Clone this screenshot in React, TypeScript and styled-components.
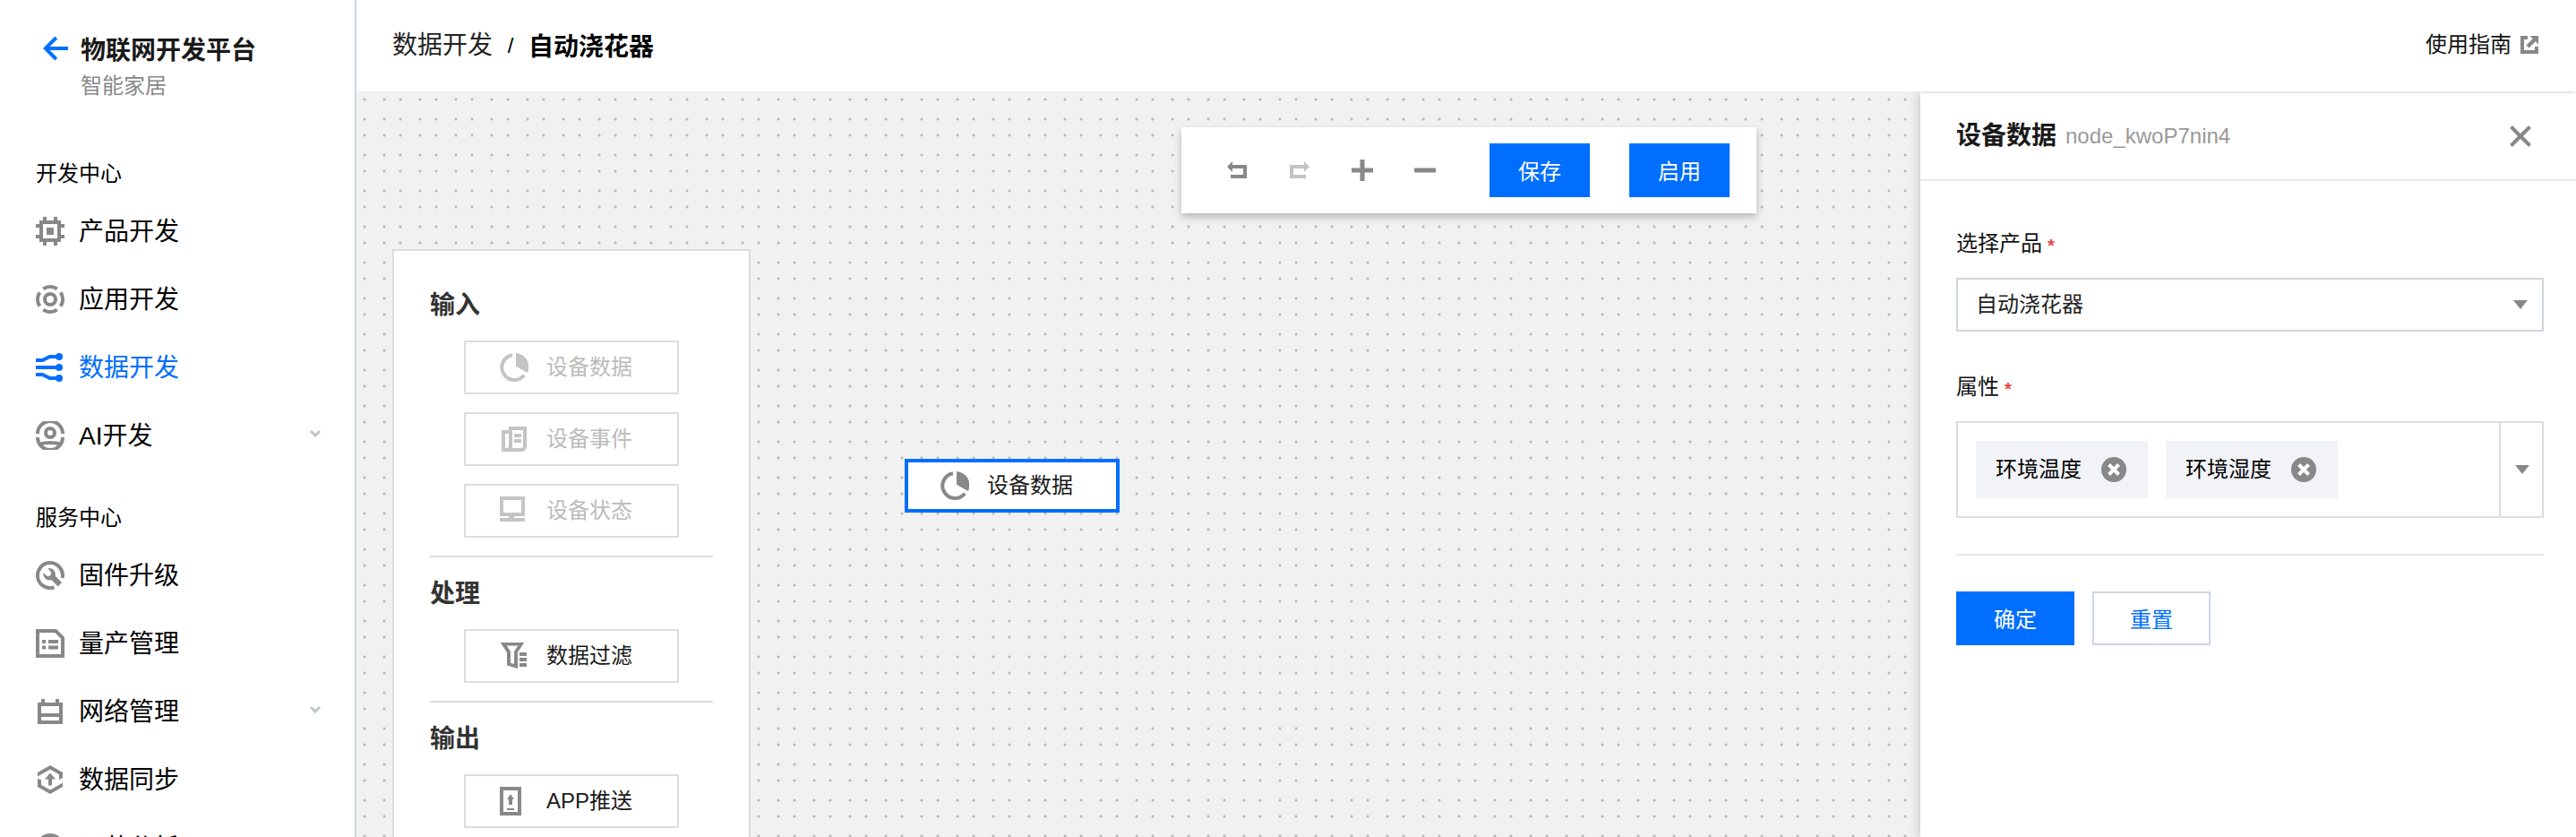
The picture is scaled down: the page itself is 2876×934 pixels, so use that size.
import React from 'react';
import styled, { createGlobalStyle, css } from 'styled-components';

const GlobalStyle = createGlobalStyle`
  *, *::before, *::after { box-sizing: border-box; }
  html, body { margin: 0; padding: 0; }
  body {
    font-family: "Liberation Sans", "Noto Sans CJK SC", sans-serif;
    font-size: 24px;
    line-height: 40px;
    color: #000;
    background: #fff;
    overflow: hidden;
  }
  button { font: inherit; margin: 0; padding: 0; }
`;

const BLUE = '#006eff';
const GREY = '#888';

/* ---------- icons ---------- */

const Icon = styled.svg<{ $size?: number; $color?: string }>`
  display: block;
  flex: none;
  width: ${p => p.$size ?? 32}px;
  height: ${p => p.$size ?? 32}px;
  color: ${p => p.$color ?? GREY};
  fill: currentColor;
`;

type IconProps = { color?: string };

const BackIcon = () => (
  <Icon $size={28} $color={BLUE} viewBox="0 0 28 28">
    <path d="M28 12v4H7.6l8.6 8.6-2.8 2.8L0 14 13.4.6l2.8 2.8L7.6 12z" />
  </Icon>
);

const ProductIcon = ({ color }: IconProps) => (
  <Icon $color={color} viewBox="0 0 32 32">
    <path fillRule="evenodd" d="M8 0h4v4h8V0h4v4h4v4h4v4h-4v8h4v4h-4v4h-4v4h-4v-4h-8v4H8v-4H4v-4H0v-4h4v-8H0V8h4V4h4zM8 8v16h16V8z" />
    <rect x="12" y="12" width="8" height="8" />
  </Icon>
);

const AppIcon = ({ color }: IconProps) => (
  <Icon $color={color} viewBox="0 0 32 32">
    <g fill="none" stroke="currentColor" strokeWidth="4">
      <circle cx="16" cy="16" r="6" />
      <path d="M8.3 4.3A14 14 0 0 1 23.7 4.3M27.7 8.3A14 14 0 0 1 27.7 23.7M23.7 27.7A14 14 0 0 1 8.3 27.7M4.3 23.7A14 14 0 0 1 4.3 8.3" />
    </g>
  </Icon>
);

const DataIcon = ({ color }: IconProps) => (
  <Icon $color={color} viewBox="0 0 32 32">
    <path d="M0 8h7.500L15.500 4H26M0 16h26M0 24h7.500L15.500 28H26" fill="none" stroke="currentColor" strokeWidth="4" />
    <circle cx="26" cy="4" r="4" />
    <circle cx="26" cy="16" r="4" />
    <circle cx="26" cy="28" r="4" />
  </Icon>
);

const AiIcon = ({ color }: IconProps) => (
  <Icon $color={color} viewBox="0 0 32 32">
    <g fill="none" stroke="currentColor" strokeWidth="4">
      <circle cx="16" cy="13" r="5" />
      <path d="M2 14a14 14 0 0 1 28 0M2 18a14 14 0 0 0 28 0" />
      <path d="M5 25.500q4-1.600 11-1.600t11 1.600" />
    </g>
  </Icon>
);

const FirmwareIcon = ({ color }: IconProps) => (
  <Icon $color={color} viewBox="0 0 32 32">
    <path d="M20.500 29.300A14 14 0 1 1 29.600 19" fill="none" stroke="currentColor" strokeWidth="4" />
    <path d="M13.500 8.200a7 7 0 0 1 8.200 8.600l7.300 7.300-4.300 4.300-7.300-7.300A7 7 0 0 1 8.400 13.200l4.400 4 3.500-.9.900-3.500z" />
  </Icon>
);

const BatchIcon = ({ color }: IconProps) => (
  <Icon $color={color} viewBox="0 0 32 32">
    <path fillRule="evenodd" d="M0 0h23l9 9v23H0zM4 4v24h24V10.800L21.300 4z" />
    <path d="M7 12h4v4H7zM14 12h11v4H14zM7 18.500h4v4H7zM14 18.500h11v4H14z" />
  </Icon>
);

const NetworkIcon = ({ color }: IconProps) => (
  <Icon $color={color} viewBox="0 0 32 32">
    <path fillRule="evenodd" d="M6 2h4v4h12V2h4v4h4v24H2V6h4zM6 10v8h20v-8zM6 22v4h20v-4z" />
  </Icon>
);

const SyncIcon = ({ color }: IconProps) => (
  <Icon $color={color} viewBox="0 0 32 32">
    <path d="M2 12.500V8L16 0l14 8v6l-4 2.300v-6L16 4.600zM30 19.500V24l-14 8-14-8v-9.500l4 2v5.200l10 5.700z" />
    <path d="M16 8.500l6 7h-4v7h-4v-7h-4z" />
  </Icon>
);

const AnalyticsIcon = ({ color }: IconProps) => (
  <Icon $color={color} viewBox="0 0 32 32">
    <circle cx="16" cy="16" r="14" fill="none" stroke="currentColor" strokeWidth="4" />
    <path d="M9 16h3v7H9zM14.500 12h3v11h-3zM20 9h3v14h-3z" />
  </Icon>
);

const PieIcon = ({ color }: IconProps) => (
  <Icon $color={color} viewBox="0 0 32 32">
    <path d="M14 2.200A14 14 0 1 0 27.200 24.800" fill="none" stroke="currentColor" strokeWidth="4" />
    <path d="M18 0a15.500 15.500 0 0 1 12.900 22L18 14.800z" />
  </Icon>
);

const EventIcon = ({ color }: IconProps) => (
  <Icon $color={color} viewBox="0 0 32 32">
    <path fillRule="evenodd" d="M10 2h20v22a6 6 0 0 1-6 6H2V6h8zM14 6v18.500q0 1-.4 1.500H24a2 2 0 0 0 2-2V6zM6 10v16h2q2 0 2-2V10z" />
    <path d="M16 10h8v4h-8zM16 16h8v4h-8z" />
  </Icon>
);

const StatusIcon = ({ color }: IconProps) => (
  <Icon $color={color} viewBox="0 0 32 32">
    <path fillRule="evenodd" d="M0 0h28v22H16v2h12v4H0v-4h10v-2H0zM4 4v14h20V4z" />
  </Icon>
);

const FilterIcon = ({ color }: IconProps) => (
  <Icon $color={color} viewBox="0 0 32 32">
    <path fillRule="evenodd" d="M.7 1h26.600L20 12v18L8 26.500V12zM7.700 4.500 12 11v12.800l4 1.200V11l4.300-6.500z" />
    <path d="M22 12h8v4h-8zM22 18h8v4h-8zM22 24h8v4h-8z" />
  </Icon>
);

const PushIcon = ({ color }: IconProps) => (
  <Icon $color={color} viewBox="0 0 32 32">
    <path fillRule="evenodd" d="M0 0h24v32H0zM4 4v24h16V4z" />
    <path d="M12 8l4 6h-2v6h-4v-6H8zM8 24h8v2H8z" />
  </Icon>
);

const UndoIcon = ({ color }: IconProps) => (
  <Icon $color={color} viewBox="0 0 32 32">
    <path d="M5 12l6-6v4h16v15H9v-4h14v-7H11v4z" />
  </Icon>
);

const RedoIcon = ({ color }: IconProps) => (
  <Icon $color={color} viewBox="0 0 32 32">
    <path d="M27 12l-6-6v4H5v15h18v-4H9v-7h12v4z" />
  </Icon>
);

const PlusIcon = () => (
  <Icon viewBox="0 0 32 32">
    <path d="M13.500 4h5v9.500H28v5h-9.500V28h-5v-9.500H4v-5h9.500z" />
  </Icon>
);

const MinusIcon = () => (
  <Icon viewBox="0 0 32 32">
    <path d="M4 13.500h24v5H4z" />
  </Icon>
);

const ExternalIcon = () => (
  <Icon $size={20} viewBox="0 0 20 20">
    <path d="M0 0h8v4H4v12h12v-4h4v8H0zM10.500 0H20v9.500l-3.200-3.200-7.300 7.300-3-3L13.700 3.200z" />
  </Icon>
);

const CloseIcon = () => (
  <Icon $size={24} viewBox="0 0 24 24">
    <path d="M1.500 1.500l21 21M22.500 1.500l-21 21" stroke="currentColor" strokeWidth="4" fill="none" />
  </Icon>
);

const RemoveIcon = () => (
  <Icon $size={28} viewBox="0 0 28 28">
    <circle cx="14" cy="14" r="14" />
    <path d="M8.500 8.500l11 11M19.500 8.500l-11 11" stroke="#fff" strokeWidth="4" fill="none" />
  </Icon>
);

const ChevronSvg = styled.svg`
  display: block;
  width: 12px;
  height: 8px;
  margin: 0 0 4px auto;
`;

const Chevron = () => (
  <ChevronSvg viewBox="0 0 12 8">
    <path d="M1 1l5 5 5-5" fill="none" stroke="#bfc6c8" strokeWidth="3" />
  </ChevronSvg>
);

const Caret = styled.span`
  width: 0;
  height: 0;
  border: 8px solid transparent;
  border-top: 10px solid ${GREY};
  border-bottom: 0;
`;

/* ---------- frame ---------- */

const Page = styled.div`
  display: flex;
  width: 2876px;
  height: 934px;
  overflow: hidden;
`;

const Sidebar = styled.nav`
  flex: none;
  width: 398px;
  padding-top: 36px;
  border-right: 2px solid #cfd5e3;
  overflow: hidden;
`;

const Brand = styled.div`
  display: flex;
  align-items: flex-start;
  gap: 14px;
  height: 137px;
  padding: 0 0 0 48px;

  ${Icon} { margin-top: 4px; }
`;

const BrandTitle = styled.div`
  height: 40px;
  padding-top: 1px;
  font-size: 28px;
  font-weight: 700;
  color: #1a1a1a;
`;

const BrandSub = styled.div`
  color: ${GREY};
`;

const MenuGroup = styled.section`
  margin-bottom: 33px;
`;

const GroupTitle = styled.div`
  height: 47px;
  padding: 1px 0 0 40px;
`;

const MenuItem = styled.a<{ $active?: boolean }>`
  display: flex;
  align-items: center;
  gap: 16px;
  height: 76px;
  padding: 0 38px 0 40px;
  font-size: 28px;
  color: ${p => (p.$active ? BLUE : '#000')};
`;

const MenuLabel = styled.span`
  padding-top: 1px;
`;

const Main = styled.main`
  flex: 1;
  min-width: 0;
  display: flex;
  flex-direction: column;
`;

const Header = styled.header`
  flex: none;
  display: flex;
  justify-content: space-between;
  height: 102px;
  padding: 30px 42px 0 40px;
`;

const Breadcrumb = styled.div`
  display: flex;
  padding-top: 1px;
  font-size: 28px;
  color: #222;
`;

const Slash = styled.span`
  width: 40px;
  text-align: center;
  font-size: 24px;
  color: #000;
`;

const Current = styled.strong`
  padding-top: 2px;
  color: #000;
`;

const Guide = styled.a`
  display: flex;
  align-items: center;
  gap: 10px;
  height: 40px;
  color: #111;
`;

const Workspace = styled.div`
  flex: 1;
  display: flex;
  min-height: 0;
`;

const dot = (x: number, y: number) =>
  `radial-gradient(circle at ${x}px ${y}px, #b9b9b9 1px, rgba(185, 185, 185, 0) 2px)`;

const Canvas = styled.div`
  position: relative;
  flex: 1;
  background-color: #f1f1f1;
  background-image: ${dot(9, 9)}, ${dot(31, 9)}, ${dot(9, 31)}, ${dot(31, 31)};
  background-size: 40px 40px;
`;

/* ---------- canvas parts ---------- */

const Toolbar = styled.div`
  position: absolute;
  left: 921px;
  top: 40px;
  display: flex;
  align-items: center;
  width: 642px;
  height: 96px;
  padding: 0 30px 0 46px;
  background: #fff;
  box-shadow: 0 4px 8px rgba(54, 58, 80, 0.32);
`;

const ToolIcons = styled.div`
  display: flex;
  gap: 38px;
  margin-right: 56px;
`;

const ToolButtons = styled.div`
  display: flex;
  gap: 44px;
`;

const Button = styled.button<{ $width: number; $outline?: boolean }>`
  width: ${p => p.$width}px;
  height: 60px;
  padding-top: 3px;
  border: 0;
  background: ${BLUE};
  color: #fff;
  ${p => p.$outline && css`
    border: 2px solid #cfd5e3;
    background: #fff;
    color: ${BLUE};
  `}
`;

const Palette = styled.aside`
  position: absolute;
  left: 40px;
  top: 176px;
  width: 400px;
  height: 760px;
  padding: 20px 40px 0;
  border: 2px solid #ddd;
  background: #fff;
`;

const PaletteGroup = styled.section`
  display: flex;
  flex-direction: column;
  align-items: center;
  gap: 20px;
  padding: 20px 0;
  border-bottom: 2px solid #ddd;
`;

const PaletteTitle = styled.h3`
  align-self: stretch;
  height: 40px;
  margin: 0;
  padding-top: 1px;
  font-size: 28px;
  color: #333;
`;

const NodeCard = styled.div<{ $disabled?: boolean; $selected?: boolean }>`
  display: flex;
  align-items: center;
  gap: 20px;
  width: 240px;
  height: 60px;
  padding-left: ${p => (p.$selected ? 36 : 38)}px;
  border: ${p => (p.$selected ? `4px solid ${BLUE}` : '2px solid #ddd')};
  background: #fff;
  color: ${p => (p.$disabled ? '#bbb' : '#1a1a1a')};
`;

const PlacedNode = styled.div`
  position: absolute;
  left: 612px;
  top: 410px;
`;

/* ---------- property drawer ---------- */

const Drawer = styled.aside`
  position: relative;
  flex: none;
  width: 732px;
  margin-top: 2px;
  background: #fff;
  box-shadow: 0 0 12px rgba(54, 58, 80, 0.3);
  clip-path: inset(-2px 0 0 -20px);
`;

const DrawerHeader = styled.div`
  display: flex;
  align-items: center;
  height: 98px;
  padding: 0 50px 0 40px;
  border-bottom: 2px solid #e5e8ed;

  ${Icon} { margin-left: auto; }
`;

const DrawerTitle = styled.strong`
  font-size: 28px;
  color: #1a1a1a;
`;

const NodeId = styled.span`
  margin-left: 10px;
  color: #999;
`;

const DrawerBody = styled.div`
  padding: 50px 36px 0 40px;
`;

const Field = styled.div`
  & + & { margin-top: 42px; }
`;

const Label = styled.div`
  display: flex;
  gap: 6px;
  height: 58px;
  color: #111;
`;

const Required = styled.span`
  color: #e54545;
  font-size: 20px;
  font-weight: 700;
  line-height: 44px;
`;

const Select = styled.div`
  display: flex;
  align-items: center;
  justify-content: space-between;
  height: 60px;
  padding: 0 16px 0 20px;
  border: 2px solid #cfd5de;
  color: #222;
`;

const TagSelect = styled.div`
  display: flex;
  height: 108px;
  border: 2px solid #ddd;
`;

const Tags = styled.div`
  flex: 1;
  display: flex;
  align-items: center;
  gap: 20px;
  padding-left: 20px;
`;

const Tag = styled.span`
  display: flex;
  align-items: center;
  gap: 22px;
  height: 64px;
  padding: 0 24px 0 22px;
  background: #f2f3f8;
`;

const DropButton = styled.div`
  display: flex;
  align-items: center;
  width: 48px;
  padding-left: 16px;
  border-left: 2px solid #ddd;
`;

const Actions = styled.div`
  display: flex;
  gap: 20px;
  margin-top: 40px;
  padding-top: 40px;
  border-top: 2px solid #e5e8ed;
`;

type Entry = { label: string; icon: React.FC<IconProps>; active?: boolean; expandable?: boolean };

const MENU: { title: string; items: Entry[] }[] = [
  {
    title: '开发中心',
    items: [
      { label: '产品开发', icon: ProductIcon },
      { label: '应用开发', icon: AppIcon },
      { label: '数据开发', icon: DataIcon, active: true },
      { label: 'AI开发', icon: AiIcon, expandable: true },
    ],
  },
  {
    title: '服务中心',
    items: [
      { label: '固件升级', icon: FirmwareIcon },
      { label: '量产管理', icon: BatchIcon },
      { label: '网络管理', icon: NetworkIcon, expandable: true },
      { label: '数据同步', icon: SyncIcon },
      { label: '运营分析', icon: AnalyticsIcon },
    ],
  },
];

const PALETTE: { title: string; disabled?: boolean; nodes: Entry[] }[] = [
  {
    title: '输入',
    disabled: true,
    nodes: [
      { label: '设备数据', icon: PieIcon },
      { label: '设备事件', icon: EventIcon },
      { label: '设备状态', icon: StatusIcon },
    ],
  },
  { title: '处理', nodes: [{ label: '数据过滤', icon: FilterIcon }] },
  { title: '输出', nodes: [{ label: 'APP推送', icon: PushIcon }] },
];

export default function App() {
  return (
    <>
      <GlobalStyle />
      <Page>
        <Sidebar>
          <Brand>
            <BackIcon />
            <div>
              <BrandTitle>物联网开发平台</BrandTitle>
              <BrandSub>智能家居</BrandSub>
            </div>
          </Brand>
          {MENU.map(group => (
            <MenuGroup key={group.title}>
              <GroupTitle>{group.title}</GroupTitle>
              {group.items.map(({ label, icon: Glyph, active, expandable }) => (
                <MenuItem key={label} $active={active}>
                  <Glyph color={active ? BLUE : GREY} />
                  <MenuLabel>{label}</MenuLabel>
                  {expandable && <Chevron />}
                </MenuItem>
              ))}
            </MenuGroup>
          ))}
        </Sidebar>
        <Main>
          <Header>
            <Breadcrumb>
              <span>数据开发</span>
              <Slash>/</Slash>
              <Current>自动浇花器</Current>
            </Breadcrumb>
            <Guide>
              <span>使用指南</span>
              <ExternalIcon />
            </Guide>
          </Header>
          <Workspace>
            <Canvas>
              <Palette>
                {PALETTE.map(group => (
                  <PaletteGroup key={group.title}>
                    <PaletteTitle>{group.title}</PaletteTitle>
                    {group.nodes.map(({ label, icon: Glyph }) => (
                      <NodeCard key={label} $disabled={group.disabled}>
                        <Glyph color={group.disabled ? '#c4c4c4' : GREY} />
                        <span>{label}</span>
                      </NodeCard>
                    ))}
                  </PaletteGroup>
                ))}
              </Palette>
              <PlacedNode>
                <NodeCard $selected>
                  <PieIcon />
                  <span>设备数据</span>
                </NodeCard>
              </PlacedNode>
              <Toolbar>
                <ToolIcons>
                  <UndoIcon />
                  <RedoIcon color="#c4c4c4" />
                  <PlusIcon />
                  <MinusIcon />
                </ToolIcons>
                <ToolButtons>
                  <Button $width={112}>保存</Button>
                  <Button $width={112}>启用</Button>
                </ToolButtons>
              </Toolbar>
            </Canvas>
            <Drawer>
              <DrawerHeader>
                <DrawerTitle>设备数据</DrawerTitle>
                <NodeId>node_kwoP7nin4</NodeId>
                <CloseIcon />
              </DrawerHeader>
              <DrawerBody>
                <Field>
                  <Label>选择产品<Required>*</Required></Label>
                  <Select>
                    <span>自动浇花器</span>
                    <Caret />
                  </Select>
                </Field>
                <Field>
                  <Label>属性<Required>*</Required></Label>
                  <TagSelect>
                    <Tags>
                      <Tag>环境温度<RemoveIcon /></Tag>
                      <Tag>环境湿度<RemoveIcon /></Tag>
                    </Tags>
                    <DropButton><Caret /></DropButton>
                  </TagSelect>
                </Field>
                <Actions>
                  <Button $width={132}>确定</Button>
                  <Button $width={132} $outline>重置</Button>
                </Actions>
              </DrawerBody>
            </Drawer>
          </Workspace>
        </Main>
      </Page>
    </>
  );
}
